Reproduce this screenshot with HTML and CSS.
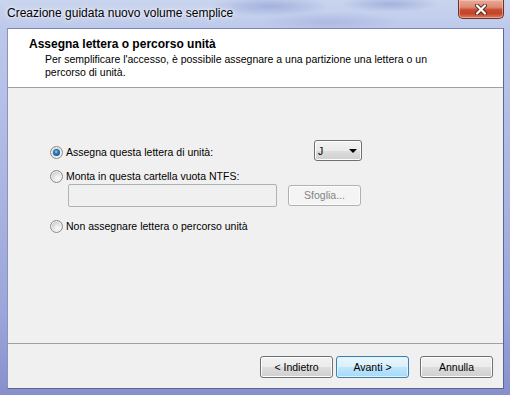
FILE: index.html
```html
<!DOCTYPE html>
<html>
<head>
<meta charset="utf-8">
<link rel="stylesheet" href="styles.css">
</head>
<body>
<div class="window">
  <div class="titlebar">
    <span class="title">Creazione guidata nuovo volume semplice</span>
    <div class="close">
      <svg width="14" height="11" viewBox="0 0 14 11">
        <path d="M3 1.5 L11 9.5 M11 1.5 L3 9.5" stroke="#5a2a20" stroke-width="4" stroke-linecap="round" fill="none"/>
        <path d="M3 1.5 L11 9.5 M11 1.5 L3 9.5" stroke="#ffffff" stroke-width="2.2" stroke-linecap="round" fill="none"/>
      </svg>
    </div>
  </div>
  <div class="client">
    <div class="header">
      <div class="h-title">Assegna lettera o percorso unità</div>
      <div class="h-sub">Per semplificare l'accesso, è possibile assegnare a una partizione una lettera o un<br>percorso di unità.</div>
    </div>
    <div class="content">
      <div class="row row1">
        <div class="opt"><span class="radio checked"></span><span>Assegna questa lettera di unità:</span></div>
        <div class="combo"><span>J</span><span class="arrow"></span></div>
      </div>
      <div class="row row2">
        <div class="opt"><span class="radio"></span><span>Monta in questa cartella vuota NTFS:</span></div>
      </div>
      <div class="row row3">
        <div class="textbox"></div>
        <div class="btn disabled browse">Sfoglia...</div>
      </div>
      <div class="row row4">
        <div class="opt"><span class="radio"></span><span>Non assegnare lettera o percorso unità</span></div>
      </div>
    </div>
    <div class="footer">
      <div class="btn">&lt; Indietro</div>
      <div class="btn default">Avanti &gt;</div>
      <div class="btn cancel">Annulla</div>
    </div>
  </div>
</div>
</body>
</html>
```

FILE: styles.css
```css
* { box-sizing: border-box; }
html, body { margin: 0; padding: 0; }
body {
  width: 510px;
  height: 395px;
  overflow: hidden;
  font-family: "Liberation Sans", Arial, sans-serif;
  font-size: 10.5px;
  color: #000;
}
.window {
  width: 510px;
  height: 395px;
  display: flex;
  flex-direction: column;
  background:
    radial-gradient(ellipse 60px 10px at 270px 6px, rgba(120,135,200,0.45), transparent),
    radial-gradient(ellipse 50px 8px at 390px 4px, rgba(120,135,200,0.45), transparent),
    radial-gradient(ellipse 70px 10px at 330px 22px, rgba(140,150,210,0.35), transparent),
    linear-gradient(180deg, #c9d5ee 0%, #bcc8ea 8%, #aeb9e3 40%, #9aa5da 80%, #8790cc 100%);
}
.titlebar {
  height: 28px;
  display: flex;
  align-items: flex-start;
  padding-left: 7px;
}
.title {
  font-family: "Liberation Sans", Arial, sans-serif;
  font-size: 12px;
  line-height: 14px;
  margin-top: 6px;
  color: #000;
  text-shadow: 0 0 6px rgba(255,255,255,0.9), 0 0 3px rgba(255,255,255,0.9);
}
.close {
  margin-left: auto;
  margin-right: 6px;
  width: 46px;
  height: 19px;
  border: 1px solid #6b3326;
  border-top: none;
  border-radius: 0 0 5px 5px;
  background: linear-gradient(180deg, #e9a99a 0%, #dc8a73 40%, #c84a2e 55%, #c5442a 75%, #dc7b5d 100%);
  box-shadow: inset 0 0 0 1px rgba(255,210,200,0.5);
  display: flex;
  align-items: center;
  justify-content: center;
}
.close svg { display: block; }
.client {
  margin: 0 6px 6px 7px;
  height: 361px;
  border: 1px solid #5d6690;
  border-left-color: #8b93bd;
  border-top-color: #7c86b4;
  display: flex;
  flex-direction: column;
  background: #f0f0f0;
}
.header {
  height: 59px;
  background: #fff;
  border-bottom: 1px solid #a0a0a0;
  padding-top: 8px;
}
.h-title {
  font-weight: bold;
  font-size: 12px;
  line-height: 14px;
  padding-left: 21px;
}
.h-sub {
  margin-top: 2px;
  padding-left: 37px;
  line-height: 13px;
}
.content {
  height: 256px;
  border-bottom: 1px solid #a0a0a0;
  padding-left: 42px;
  padding-top: 52px;
}
.row { display: flex; align-items: center; }
.row1 { height: 21px; }
.row1 .opt { width: 264px; margin-top: 3px; }
.row2 { height: 13px; margin-top: 9px; }
.row3 { height: 23px; margin-top: 1px; padding-left: 18px; }
.row4 { height: 13px; margin-top: 13px; }
.opt {
  display: flex;
  align-items: center;
  gap: 3px;
  line-height: 13px;
  white-space: nowrap;
}
.radio {
  width: 13px;
  height: 13px;
  border-radius: 50%;
  border: 1px solid #8a8b8b;
  background: radial-gradient(circle at 62% 66%, #fbfbfb 0%, #ececec 30%, #cbcbcb 70%, #b5b5b5 100%);
  box-shadow: inset 0 0 0 1px #f2f2f2;
  flex: none;
  display: flex;
  align-items: center;
  justify-content: center;
}
.radio.checked::after {
  content: "";
  width: 7px;
  height: 7px;
  border-radius: 50%;
  background: radial-gradient(circle at 45% 40%, #9bd1f5 0%, #2c79b5 35%, #0d3c66 100%);
}
.combo {
  width: 48px;
  height: 21px;
  border: 1px solid #707070;
  border-radius: 3px;
  background: linear-gradient(180deg, #f2f2f2 0%, #ebebeb 50%, #dddddd 51%, #cfcfcf 100%);
  box-shadow: inset 0 0 0 1px #fcfcfc;
  display: flex;
  align-items: center;
  padding-left: 3px;
  padding-right: 4px;
  justify-content: space-between;
}
.arrow {
  width: 0;
  height: 0;
  border-left: 4px solid transparent;
  border-right: 4px solid transparent;
  border-top: 4px solid #000;
}
.textbox {
  width: 209px;
  height: 23px;
  border: 1px solid #adb2b5;
  border-radius: 2px;
  background: #f0f0f0;
}
.btn {
  width: 73px;
  height: 22px;
  border: 1px solid #707070;
  border-radius: 3px;
  background: linear-gradient(180deg, #f2f2f2 0%, #ebebeb 50%, #dddddd 51%, #cfcfcf 100%);
  box-shadow: inset 0 0 0 1px #fcfcfc;
  display: flex;
  align-items: center;
  justify-content: center;
  line-height: 13px;
}
.btn.browse {
  margin-left: 11px;
  height: 21px;
}
.btn.disabled {
  border-color: #adb2b5;
  background: #f4f4f4;
  color: #838383;
}
.btn.default {
  border-color: #3c7fb1;
  background: linear-gradient(180deg, #eaf6fd 0%, #d9f0fc 50%, #bee6fd 51%, #a7d9f5 100%);
  box-shadow: inset 0 0 0 1px #dff2fd;
}
.footer {
  flex: 1;
  display: flex;
  justify-content: flex-end;
  align-items: flex-start;
  padding-top: 12px;
  padding-right: 10px;
  gap: 3px;
}
.btn.cancel { margin-left: 8px; }
```
